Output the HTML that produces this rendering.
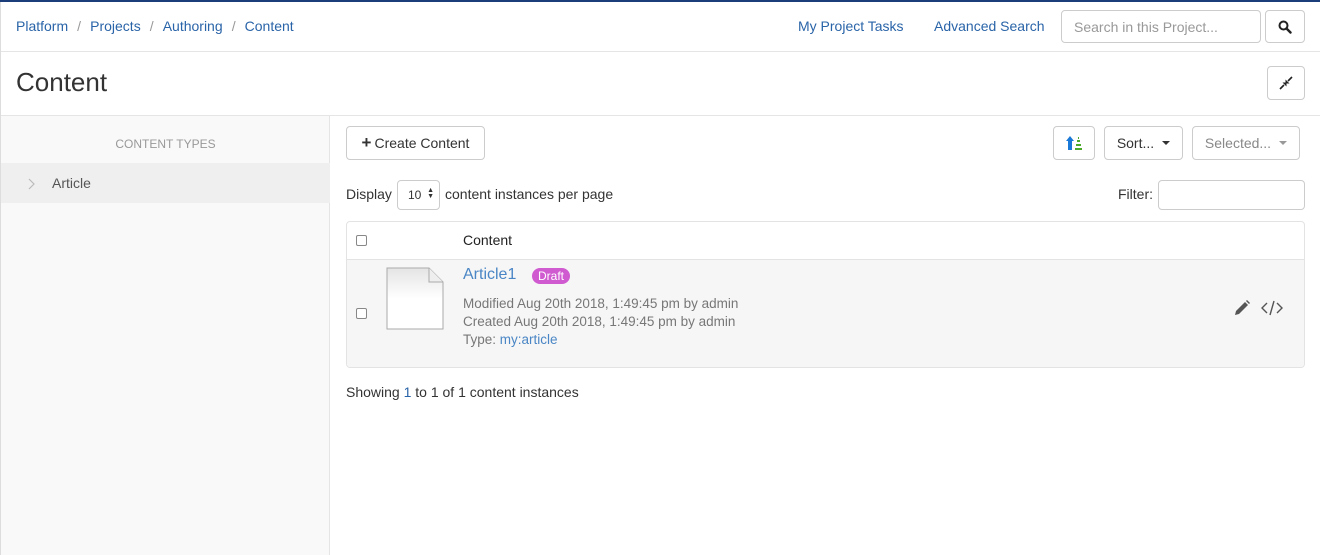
<!DOCTYPE html>
<html><head><style>
*{box-sizing:border-box;margin:0;padding:0}
body{width:1320px;height:555px;font-family:"Liberation Sans",sans-serif;font-size:14px;color:#333;background:#fff;position:relative;overflow:hidden}
a{color:#2a64a8;text-decoration:none}
.abs{position:absolute}
.btn{position:absolute;border:1px solid #ccc;border-radius:4px;background:#fff;height:34px;display:flex;align-items:center;justify-content:center;font-size:14px;color:#333}
.caret{display:inline-block;width:0;height:0;border-left:4px solid transparent;border-right:4px solid transparent;border-top:4px solid #333;margin-left:8px}
.cb{position:absolute;width:11px;height:11px;border:1px solid #888;border-radius:2px;background:#fff}
.sep{display:inline-block;width:22px;text-align:center;color:#999}
</style></head><body>
<div class="abs" style="left:0;top:0;width:1320px;height:2px;background:#1b3d7a"></div>
<div class="abs" style="left:0;top:2px;width:1px;height:553px;background:#ddd"></div>
<div class="abs" style="left:16px;top:18px;font-size:14px"><a>Platform</a><span class="sep">/</span><a>Projects</a><span class="sep">/</span><a>Authoring</a><span class="sep">/</span><a>Content</a></div>
<a class="abs" style="left:798px;top:18px">My Project Tasks</a>
<a class="abs" style="left:934px;top:18px">Advanced Search</a>
<div class="abs" style="left:1061px;top:10px;width:200px;height:33px;border:1px solid #ccc;border-radius:4px;padding:8px 12px;color:#999">Search in this Project...</div>
<div class="btn" style="left:1265px;top:10px;width:40px;height:33px"><svg width="14" height="14" viewBox="0 0 14 14"><circle cx="5.5" cy="5.5" r="4" fill="none" stroke="#222" stroke-width="2"/><path d="M8.5 8.5L12.5 12.5" stroke="#222" stroke-width="2.4" stroke-linecap="round"/></svg></div>
<div class="abs" style="left:1px;top:51px;width:1319px;height:1px;background:#e5e5e5"></div>
<div class="abs" style="left:16px;top:67px;font-size:26px;color:#333">Content</div>
<div class="btn" style="left:1267px;top:66px;width:38px;height:34px"><svg width="14" height="14" viewBox="0 0 14 14"><path d="M1 13L5 9M13 1L9 5" stroke="#222" stroke-width="1.6"/><path d="M3.5 6.5L7.5 6.5L7.5 10.5Z M10.5 7.5L6.5 7.5L6.5 3.5Z" fill="#222"/></svg></div>
<div class="abs" style="left:1px;top:115px;width:1319px;height:1px;background:#e5e5e5"></div>
<div class="abs" style="left:1px;top:116px;width:329px;height:439px;background:#f9f9f9;border-right:1px solid #e5e5e5"></div>
<div class="abs" style="left:1px;top:137px;width:329px;text-align:center;font-size:12px;color:#999">CONTENT TYPES</div>
<div class="abs" style="left:1px;top:163px;width:329px;height:40px;background:#efefef"></div>
<svg class="abs" style="left:28px;top:178px" width="7" height="12" viewBox="0 0 7 12"><path d="M1 1L6 6L1 11" fill="none" stroke="#bbb" stroke-width="1.2"/></svg>
<div class="abs" style="left:52px;top:175px;color:#555;font-size:14px">Article</div>
<div class="btn" style="left:346px;top:126px;width:139px;height:34px"><b style="font-size:17px;margin-right:3px">+</b>Create Content</div>
<div class="btn" style="left:1053px;top:126px;width:42px;height:34px"><svg width="18" height="16" viewBox="0 0 18 16"><path d="M5 1L9 6H7V15H3V6H1Z" fill="#1a78d6"/><path d="M10 13h7v2h-7zM11 9h5v2h-5zM12 5h3v2h-3zM13 2h1v2h-1z" fill="#4caa2a"/></svg></div>
<div class="btn" style="left:1104px;top:126px;width:79px;height:34px">Sort...<span class="caret"></span></div>
<div class="btn" style="left:1192px;top:126px;width:108px;height:34px;color:#888">Selected...<span class="caret" style="border-top-color:#999"></span></div>
<div class="abs" style="left:346px;top:186px">Display</div>
<div class="abs" style="left:397px;top:180px;width:43px;height:30px;border:1px solid #ccc;border-radius:4px;font-size:12px;padding:7px 0 0 10px">10<span style="position:absolute;right:5px;top:7px;font-size:7px;line-height:6px">▲<br>▼</span></div>
<div class="abs" style="left:445px;top:186px">content instances per page</div>
<div class="abs" style="left:1118px;top:186px">Filter:</div>
<div class="abs" style="left:1158px;top:180px;width:147px;height:30px;border:1px solid #ccc;border-radius:4px"></div>
<div class="abs" style="left:346px;top:221px;width:959px;height:147px;border:1px solid #e3e3e3;border-radius:4px;overflow:hidden">
 <div class="abs" style="left:0;top:37px;width:959px;height:110px;background:#f6f6f6;border-top:1px solid #e3e3e3"></div>
</div>
<div class="cb" style="left:356px;top:235px"></div>
<div class="abs" style="left:463px;top:232px;color:#222">Content</div>
<div class="cb" style="left:356px;top:308px"></div>
<svg class="abs" style="left:386px;top:267px" width="59" height="63" viewBox="0 0 59 63"><defs><linearGradient id="g" x1="0" y1="0" x2="0" y2="1"><stop offset="0" stop-color="#e4e4e4"/><stop offset=".5" stop-color="#fff"/><stop offset="1" stop-color="#fff"/></linearGradient></defs><path d="M1 1H43L57 15V62H1Z" fill="url(#g)" stroke="#aaa"/><path d="M43 1V15H57" fill="#eee" stroke="#aaa"/></svg>
<a class="abs" style="left:463px;top:266px;font-size:16px;color:#4a86c5">Article1</a>
<div class="abs" style="left:532px;top:268px;background:#d05ad0;color:#fff;font-size:12px;padding:1px 6px;border-radius:9px">Draft</div>
<div class="abs" style="left:463px;top:295px;color:#777;line-height:18px;font-size:13.5px">Modified Aug 20th 2018, 1:49:45 pm by admin<br>Created Aug 20th 2018, 1:49:45 pm by admin<br>Type: <a style="color:#4a86c5">my:article</a></div>
<svg class="abs" style="left:1233px;top:299px" width="18" height="18" viewBox="0 0 18 18"><path d="M2 16L3 12L12 3L15 6L6 15Z" fill="#555"/><path d="M13 2L14 1L17 4L16 5Z" fill="#555"/></svg>
<svg class="abs" style="left:1261px;top:299px" width="22" height="18" viewBox="0 0 22 18"><path d="M6 4L1 9L6 14M16 4L21 9L16 14M13 2L9 16" fill="none" stroke="#555" stroke-width="1.4"/></svg>
<div class="abs" style="left:346px;top:384px">Showing <a>1</a> to 1 of 1 content instances</div>
</body></html>
